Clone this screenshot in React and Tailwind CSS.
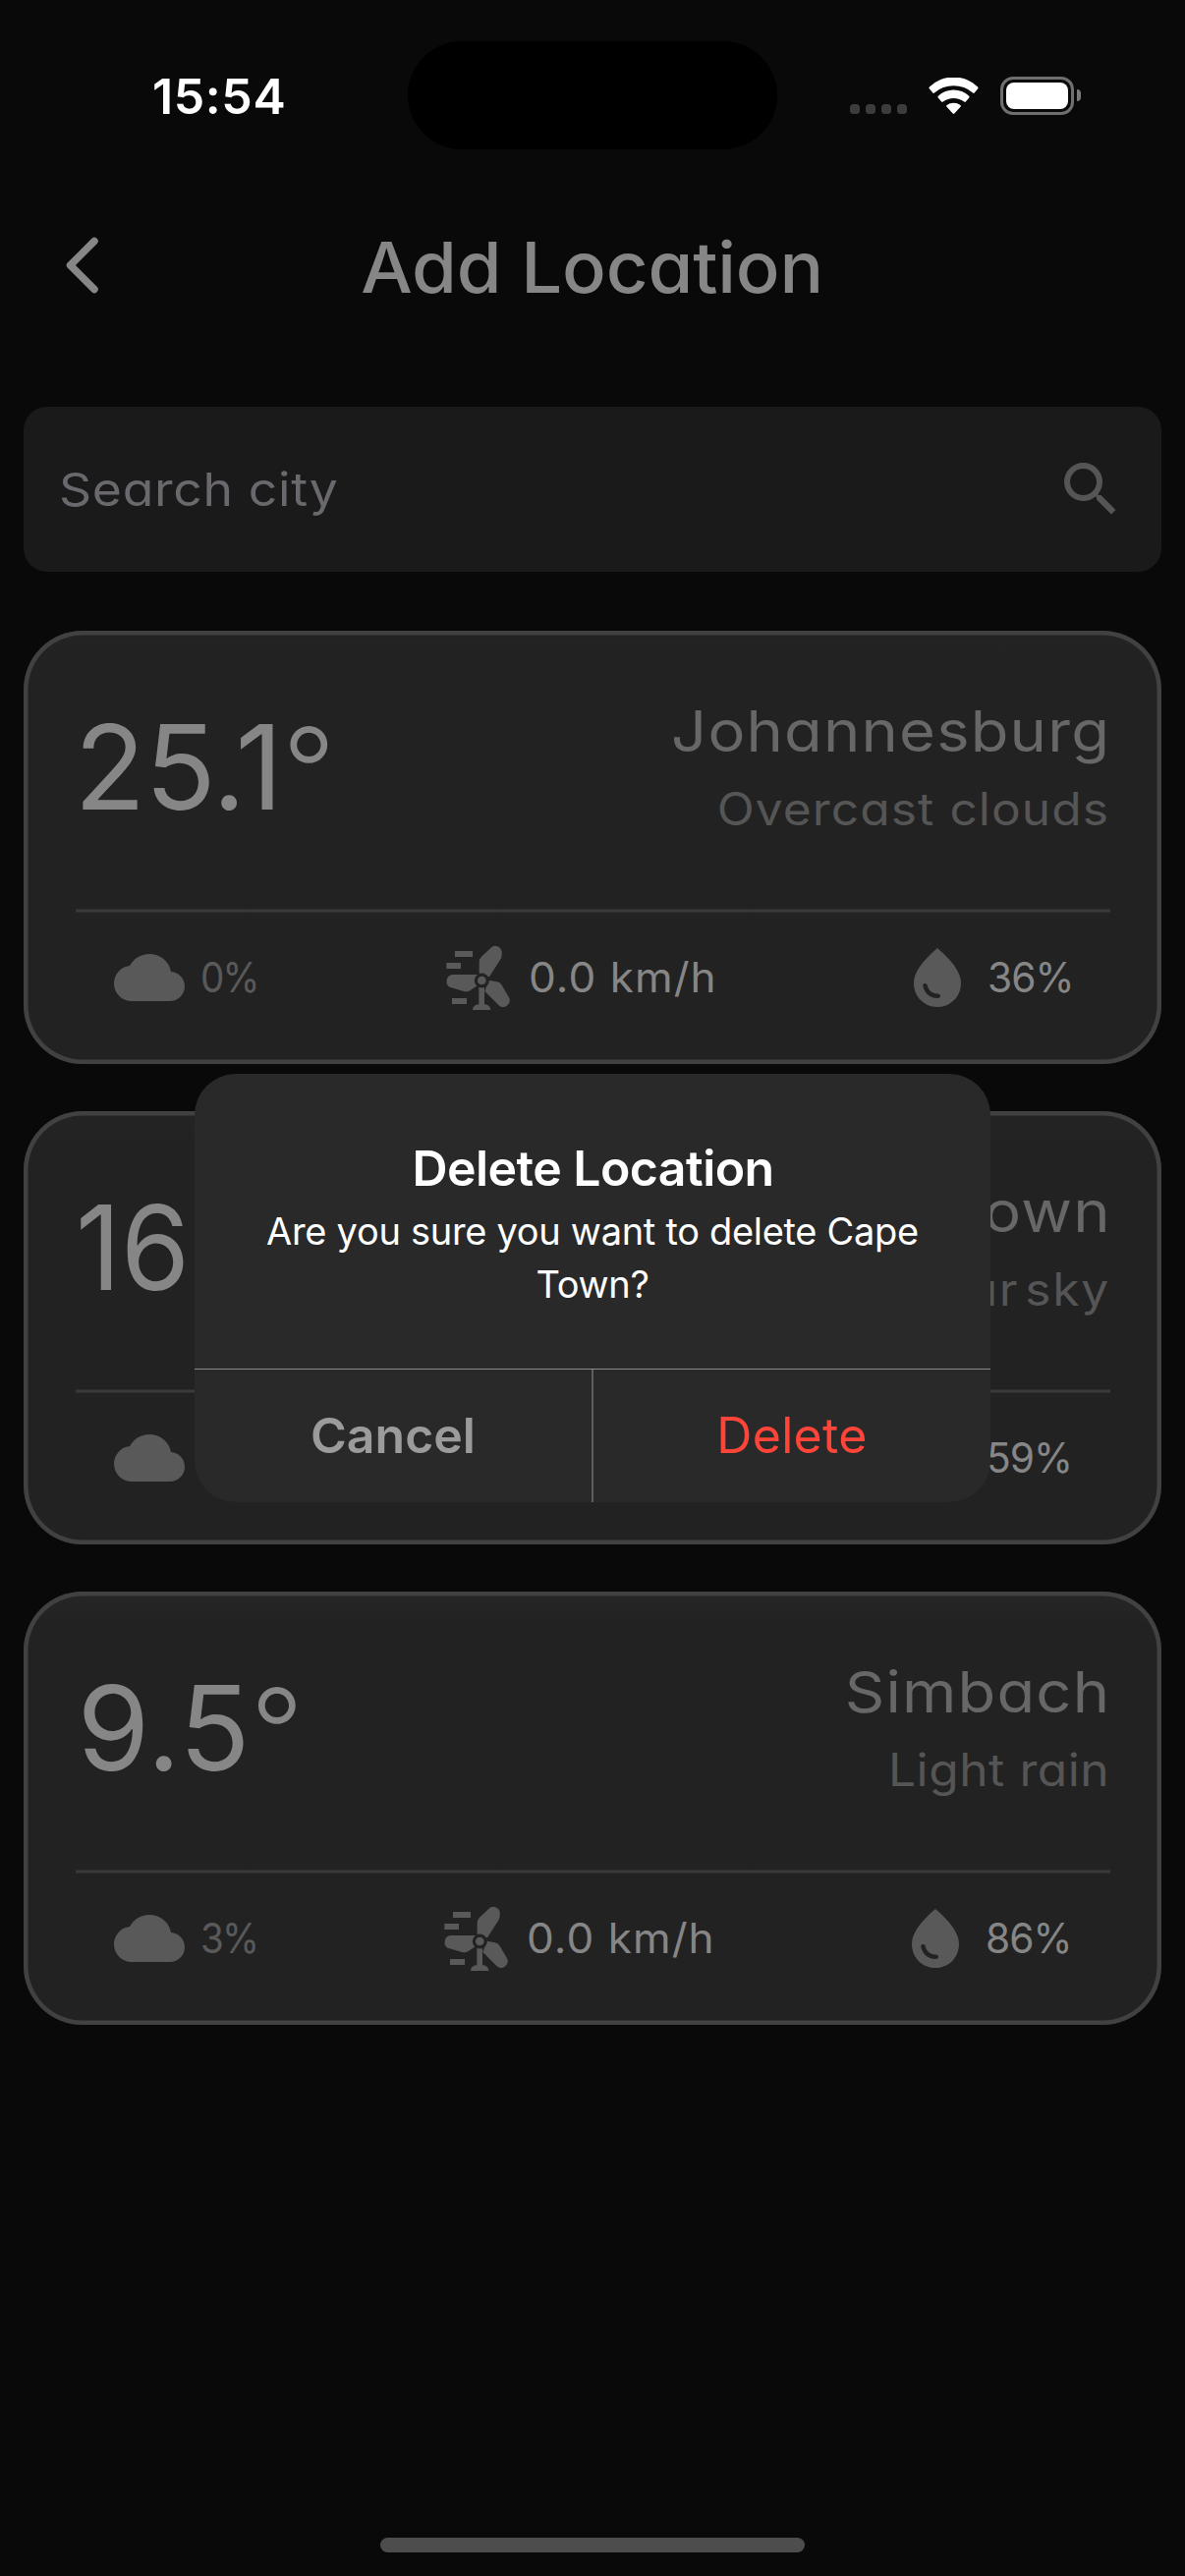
const locations = [
  {
    temp: "25.1",
    city: "Johannesburg",
    desc: "Overcast clouds",
    clouds: "0%",
    wind: "0.0 km/h",
    humidity: "36%",
    surface: "from-[#232323]",
    tempClass: "-ml-px tracking-[-0.6px]",
    descClass: "tracking-[1px]",
    cloudsClass: "w-[58px]",
    humidityClass: "w-[86px]",
  },
  {
    temp: "16.0",
    city: "Cape Town",
    desc: "Clear sky",
    clouds: "0%",
    wind: "0.0 km/h",
    humidity: "59%",
    surface: "from-[#242424]",
    tempClass: "origin-left scale-x-95",
    descClass: "tracking-[1.6px] [word-spacing:-9px]",
    cloudsClass: "w-[58px]",
    humidityClass: "w-[87px]",
  },
  {
    temp: "9.5",
    city: "Simbach",
    desc: "Light rain",
    clouds: "3%",
    wind: "0.0 km/h",
    humidity: "86%",
    surface: "from-[#262626]",
    tempClass: "ml-[2px] tracking-[0.2px]",
    descClass: "tracking-[0.5px]",
    cloudsClass: "w-[55.5px]",
    humidityClass: "w-[88px]",
  },
];

function WifiIcon() {
  return (
    <svg className="ml-[22px] h-[37px] w-[51px] fill-white" viewBox="0 0 51 37">
      <path d="M0.9 9.6A35 35 0 0 1 50.1 9.6Q50.9 10.4 50.2 11.3L46.7 15.6Q46 16.4 45.1 15.6A29.5 29.5 0 0 0 5.9 15.6Q5 16.4 4.3 15.6L0.8 11.3Q0.1 10.4 0.9 9.6Z" />
      <path d="M9.8 18.7A23 23 0 0 1 41.2 18.7Q42 19.5 41.3 20.4L37.8 24.6Q37.1 25.3 36.2 24.6A17.5 17.5 0 0 0 14.8 24.6Q13.9 25.3 13.2 24.6L9.7 20.4Q9 19.5 9.8 18.7Z" />
      <path d="M18.6 28.1A11 11 0 0 1 32.4 28.1Q33.2 28.8 32.5 29.7L26.3 36.5Q25.5 37.3 24.7 36.5L18.5 29.7Q17.8 28.8 18.6 28.1Z" />
    </svg>
  );
}

function StatusBar() {
  return (
    <div className="flex h-[152px] items-center pt-[42px]">
      <div className="ml-[155px] w-[260px] pt-0.5 text-[50px] leading-none font-semibold tracking-[0.6px] text-white">15:54</div>
      <div className="h-[110px] w-[376px] rounded-full bg-black" />
      <div className="mt-[27px] ml-[74px] flex gap-[6px]">
        {[0, 1, 2, 3].map((dot) => (
          <span key={dot} className="h-[10px] w-[10px] rounded-[3.5px] bg-[#3c3c3c]" />
        ))}
      </div>
      <WifiIcon />
      <div className="ml-[22px] h-[39px] w-[75px] rounded-[13px] border-[3px] border-[#6f6f6f] p-[3px]">
        <div className="h-full w-full rounded-[8px] bg-white" />
      </div>
      <div className="ml-[3px] h-[12px] w-[4px] rounded-r-full bg-[#7a7a7a]" />
    </div>
  );
}

function CloudIcon() {
  return (
    <svg className="size-[72px] shrink-0 fill-[#595959]" viewBox="0 0 24 24">
      <path d="M19.35 10.04A7.49 7.49 0 0 0 12 4C9.11 4 6.6 5.64 5.35 8.04A5.994 5.994 0 0 0 0 14c0 3.31 2.69 6 6 6h13c2.76 0 5-2.24 5-5 0-2.64-2.05-4.78-4.65-4.96z" />
    </svg>
  );
}

function TurbineIcon() {
  return (
    <svg className="size-[72px] shrink-0 fill-[#595959]" viewBox="60 57 216 216">
      <rect x="99" y="84" width="54" height="18" />
      <rect x="73" y="120" width="44" height="18" />
      <rect x="90" y="228" width="45" height="18" />
      <path d="M173 160V120Q173 108 180 101L208 75A20 20 0 0 1 242 93Q243 100 239 108L204 163Z" />
      <path d="M168 156H93A20.5 20.5 0 0 0 88 196L126 207Q137 210 145 205L168 189Z" />
      <path d="M202 173L227 178Q238 180 243 190L264 226A20 20 0 0 1 232 249L190 207Z" />
      <path d="M172 190H189V247H191A17 17 0 0 1 208 264H153A17 17 0 0 1 170 247H172Z" />
      <circle cx="181" cy="174" r="22.5" className="fill-[#222222]" />
      <circle cx="181" cy="174" r="13" />
    </svg>
  );
}

function DropIcon() {
  return (
    <svg className="size-[72px] shrink-0 fill-[#595959]" viewBox="0 0 24 24">
      <path d="M12 2c-5.33 4.55-8 8.48-8 11.8 0 4.98 3.8 8.2 8 8.2s8-3.22 8-8.2c0-3.32-2.67-7.25-8-11.8zM7.83 14c.37 0 .67.26.74.62.41 2.22 2.28 2.98 3.64 2.87.43-.02.79.32.79.75 0 .4-.32.73-.72.75-2.13.13-4.62-1.09-5.19-4.12a.75.75 0 0 1 .74-.87z" />
    </svg>
  );
}

function LocationCard({ temp, city, desc, clouds, wind, humidity, surface, tempClass, descClass, cloudsClass, humidityClass }) {
  return (
    <article className={`h-[441px] rounded-[60px] bg-linear-to-b to-[#222222] to-8% px-[52.5px] pt-[66px] shadow-[inset_0_0_0_4.5px_#414141] ${surface}`}>
      <div className="flex justify-between">
        <div className={`h-[143px] pt-[2px] text-[119px] leading-[143px] text-[#868686] ${tempClass}`}>
          {temp}
          <span className="inline-block translate-y-[2px] font-[350]">°</span>
        </div>
        <div className="text-right whitespace-nowrap">
          <div className="-mr-px origin-right scale-x-109 text-[58px] leading-[72px] tracking-[1.1px] text-[#676767]">{city}</div>
          <div className={`mt-[13px] origin-right scale-x-108 text-[46px] leading-[60px] text-[#555555] ${descClass}`}>{desc}</div>
        </div>
      </div>
      <div className="mt-[72px] h-[4px] border-y border-[#2e2e2e] bg-[#3a3a3a]" />
      <div className="mt-[30px] flex justify-between pr-[38.5px] pl-[39.5px] text-[42px] leading-[72px] whitespace-nowrap text-[#868686]">
        <div className="flex gap-[15.5px]">
          <CloudIcon />
          <span className={`origin-left scale-x-92 tracking-[-2px] text-[#595959] ${cloudsClass}`}>{clouds}</span>
        </div>
        <div className="flex gap-[16px]">
          <TurbineIcon />
          <span className="w-[191px] origin-left scale-x-105 tracking-[1px]">{wind}</span>
        </div>
        <div className="flex gap-[15.5px]">
          <DropIcon />
          <span className={`origin-left scale-x-97 tracking-[-1px] ${humidityClass}`}>{humidity}</span>
        </div>
      </div>
    </article>
  );
}

function DeleteDialog() {
  return (
    <div className="absolute inset-0 flex items-center justify-center">
      <div role="dialog" className="flex h-[436px] w-[810px] flex-col overflow-hidden rounded-[42px] bg-[#292929] text-center text-white">
        <div className="h-[300px] px-[60px] pt-[66px]">
          <h2 className="pl-[1px] text-[50px] leading-[60px] font-semibold tracking-[-0.55px]">Delete Location</h2>
          <p className="mt-[7px] text-[38px] leading-[54px] tracking-[-0.3px]">Are you sure you want to delete Cape Town?</p>
        </div>
        <div className="flex flex-1 border-t border-[#8c8c8c] text-[50px]">
          <button className="flex-1 font-semibold text-[#9b9b9b]">Cancel</button>
          <div className="w-[2px] bg-[#5e5e5e]" />
          <button className="flex-1 tracking-[0.3px] text-[#ff453a]">Delete</button>
        </div>
      </div>
    </div>
  );
}

export default function App() {
  return (
    <div className="relative flex h-[2622px] w-[1206px] flex-col overflow-hidden bg-[#090909] font-['Inter',sans-serif]">
      <StatusBar />
      <div className="flex flex-1 flex-col [font-feature-settings:'cv11']">
        <header className="grid h-[240px] grid-cols-[1fr_auto_1fr] items-center">
          <svg className="mb-[5px] ml-[64px] h-[64px] w-[40px] fill-none stroke-[#868686]" viewBox="0 0 40 64" strokeWidth="7.5" strokeLinecap="round" strokeLinejoin="round">
            <path d="M32 7.5L7.5 32L32 56.5" />
          </svg>
          <h1 className="scale-x-103 text-[72px] font-[550] tracking-[-0.1px] text-[#868686]">Add Location</h1>
        </header>
        <div className="mx-6 mt-[22px] flex h-[168px] items-center justify-between rounded-[24px] bg-[#1a1a1a] pr-[36px] pl-[36px]">
          <span className="origin-left scale-x-110 text-[47px] tracking-[0.6px] text-[#6a676d]">Search city</span>
          <svg className="size-[72px] fill-[#555555]" viewBox="0 0 24 24">
            <path d="M15.5 14h-.79l-.28-.27A6.471 6.471 0 0 0 16 9.5 6.5 6.5 0 1 0 9.5 16c1.61 0 3.09-.59 4.23-1.57l.27.28v.79l5 4.99L20.49 19l-4.99-5zm-6 0C7.01 14 5 11.99 5 9.5S7.01 5 9.5 5 14 7.01 14 9.5 11.99 14 9.5 14z" />
          </svg>
        </div>
        <main className="mx-6 mt-[60px] flex flex-col gap-[48px]">
          {locations.map((location) => (
            <LocationCard key={location.city} {...location} />
          ))}
        </main>
        <div className="mt-auto mb-[24px] h-[15px] w-[432px] self-center rounded-full bg-[#4d4d4d]" />
      </div>
      <DeleteDialog />
    </div>
  );
}
